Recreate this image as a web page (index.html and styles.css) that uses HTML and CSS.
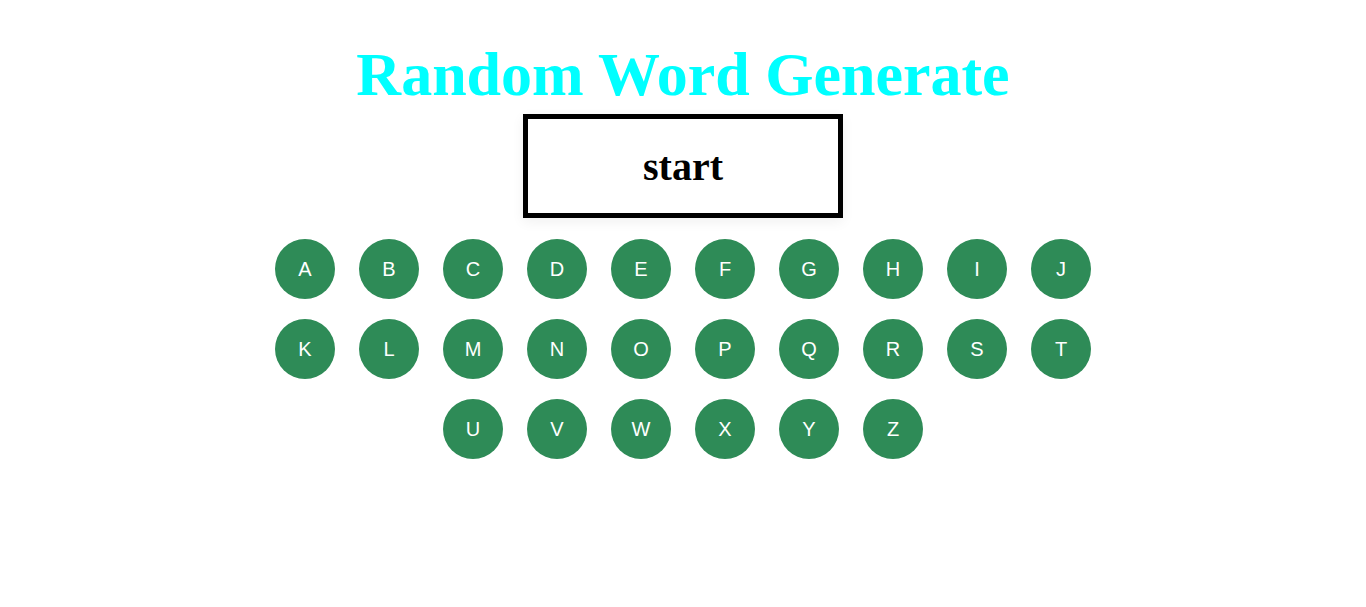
FILE: index.html
```html
<!DOCTYPE html>
<html>
<head>
<meta charset="utf-8">
<link rel="stylesheet" href="styles.css">
</head>
<body>
<main class="app">
  <h1 class="title">Random Word Generate</h1>
  <div class="display">start</div>
  <div class="keys">
    <button class="key">A</button><button class="key">B</button><button class="key">C</button><button class="key">D</button><button class="key">E</button><button class="key">F</button><button class="key">G</button><button class="key">H</button><button class="key">I</button><button class="key">J</button>
    <button class="key">K</button><button class="key">L</button><button class="key">M</button><button class="key">N</button><button class="key">O</button><button class="key">P</button><button class="key">Q</button><button class="key">R</button><button class="key">S</button><button class="key">T</button>
    <button class="key">U</button><button class="key">V</button><button class="key">W</button><button class="key">X</button><button class="key">Y</button><button class="key">Z</button>
  </div>
</main>
</body>
</html>
```
FILE: styles.css
```css
html, body {
  margin: 0;
  padding: 0;
  background: #fff;
}
.app {
  display: flex;
  flex-direction: column;
  align-items: center;
  padding-top: 38px;
  font-family: "Liberation Serif", "Times New Roman", serif;
}
.title {
  margin: 0;
  font-size: 62px;
  line-height: 72px;
  font-weight: bold;
  color: #00ffff;
}
.display {
  box-sizing: border-box;
  width: 320px;
  height: 104px;
  margin-top: 4px;
  border: 5px solid #000;
  display: flex;
  align-items: center;
  justify-content: center;
  font-size: 40px;
  font-weight: bold;
  color: #000;
  box-shadow: 0 4px 12px rgba(0,0,0,0.06);
}
.keys {
  width: 840px;
  margin-top: 21px;
  display: flex;
  flex-wrap: wrap;
  justify-content: center;
  column-gap: 24px;
  row-gap: 20px;
}
.key {
  width: 60px;
  height: 60px;
  padding: 0;
  border: none;
  border-radius: 50%;
  background: #2e8b57;
  color: #fff;
  font-family: "Liberation Sans", Arial, sans-serif;
  font-size: 20px;
  cursor: pointer;
}
```
